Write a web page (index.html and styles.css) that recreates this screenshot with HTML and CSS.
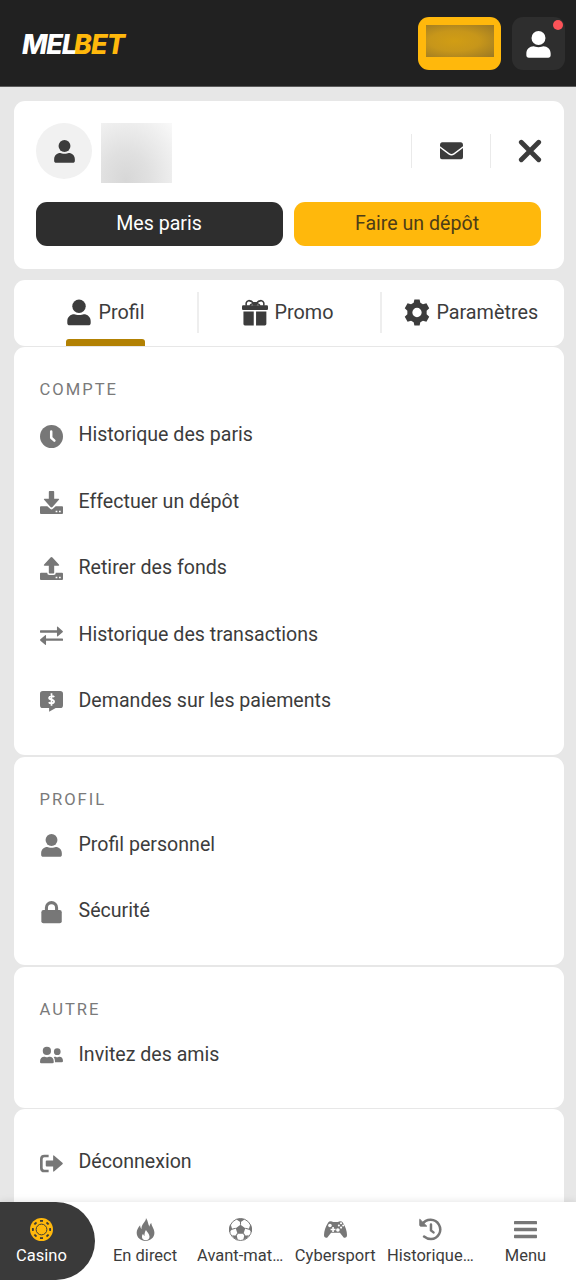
FILE: index.html
```html
<!DOCTYPE html>
<html lang="fr">
<head>
<meta charset="utf-8">
<meta name="viewport" content="width=device-width, initial-scale=1">
<title>Melbet – Profil</title>
<link rel="stylesheet" href="styles.css">
</head>
<body>
<svg class="sprite" aria-hidden="true">
  <symbol id="user" viewBox="0 0 24 24"><circle cx="12" cy="6.2" r="6.2"/><path d="M1.200 21.600V20c0-4 3-6.500 6.400-6.500 1 0 2.300.9 4.400.9s3.400-.9 4.400-.9c3.400 0 6.400 2.500 6.400 6.500v1.600c0 1.400-.8 2.200-2.200 2.200H3.400c-1.400 0-2.200-.8-2.200-2.200z"/></symbol>
  <symbol id="mail" viewBox="0 0 24 18"><path d="M0 3.200Q0 0 2.500 0h19Q24 0 24 3.200v1.200l-9.800 7.200q-2.200 1.700-4.400 0L0 4.400z"/><path d="M0 6.200l9 6.700q3 2 6 0l9-6.700v9Q24 18 21.500 18h-19Q0 18 0 15.200z"/></symbol>
  <symbol id="close" viewBox="0 0 24 24"><path d="M3.300 3.300l17.400 17.400M20.700 3.300L3.300 20.700" fill="none" stroke="currentColor" stroke-width="4.800" stroke-linecap="round"/></symbol>
  <symbol id="gift" viewBox="0 0 27 27"><rect x="0" y="6" width="27" height="5" rx="1.200"/><path d="M1.500 12.500h10.700V27H3q-1.500 0-1.500-1.500zM14.600 12.500h10.700v13q0 1.500-1.500 1.500h-9.200z"/><path d="M12.500 4.500C10.500 2 8.500 1 6.800 1.200 4.500 1.500 3.800 4 4.600 6.500M14.500 4.500C16.500 2 18.500 1 20.200 1.200c2.300.3 3 2.800 2.200 5.300M8.500 6.500c.5-2 2-2.200 4-2M18.500 6.500c-.5-2-2-2.200-4-2" fill="none" stroke="currentColor" stroke-width="1.600"/><rect x="11" y="2.600" width="5" height="4" rx="1.500"/></symbol>
  <symbol id="gear" viewBox="0 0 24 24"><path fill-rule="evenodd" d="M9.600 0h4.800l.7 3 2.400 1.400 3.200-1 2.600 4.600-2.400 2.400v3.200l2.400 2.400-2.600 4.600-3.200-1-2.400 1.400-.7 3H9.600l-.7-3-2.400-1.400-3.200 1L.7 16l2.400-2.400v-3.200L.7 8l2.600-4.600 3.200 1L8.900 3zM12 7.700a4.300 4.300 0 100 8.600 4.300 4.300 0 000-8.600z"/></symbol>
  <symbol id="clock" viewBox="0 0 24 24"><circle cx="12" cy="12" r="12"/><path d="M11.700 6.800v6.500l3.300 3" fill="none" stroke="#fff" stroke-width="2.600" stroke-linecap="round" stroke-linejoin="round"/></symbol>
  <symbol id="deposit" viewBox="0 0 24 24"><path d="M1 15.800h6.600l3.300 3q1.100.9 2.200 0l3.300-3H23q1 0 1 1V23q0 1-1 1H1q-1 0-1-1v-6.200q0-1 1-1z"/><path d="M16.300 20.500h1.800v1.600h-1.800zM19.800 20.500h1.800v1.600h-1.800z" fill="#fff"/><path d="M9.200.8Q9.200 0 10 0h4q.8 0 .8.800V8h4.400q1.400 0 .5 1.200l-6.700 7.600q-1 1-2 0L4.300 9.200Q3.400 8 4.800 8h4.400z" stroke="#fff" stroke-width="1.200" paint-order="stroke"/></symbol>
  <symbol id="withdraw" viewBox="0 0 24 24"><path d="M1 16.500h6.500q0 2.300 2.300 2.300h4.400q2.300 0 2.300-2.300H23q1 0 1 1V23q0 1-1 1H1q-1 0-1-1v-5.500q0-1 1-1z"/><path d="M16.300 20.500h1.800v1.600h-1.800zM19.800 20.500h1.800v1.600h-1.800z" fill="#fff"/><path d="M9.200 16.400q0 .8.800.8h4q.8 0 .8-.8V9h4.400q1.400 0 .5-1.200L13 .5q-1-.9-2 0L4.300 7.800Q3.400 9 4.800 9h4.400z"/></symbol>
  <symbol id="exchange" viewBox="0 0 24 24"><path d="M.5 6.600h17.200V3.200q0-1.100.9-.4l5 4.400q.7.700 0 1.400l-5 4.200q-.9.600-.9-.5V9H.5Q0 9 0 8.500V7.100q0-.5.500-.5z"/><path d="M23.500 15.200H6.300v-3q0-1.100-.9-.4l-5 4.200q-.7.700 0 1.400l5 4.200q.9.600.9-.5v-3.500h17.200q.5 0 .5-.5v-1.400q0-.5-.5-.5z"/></symbol>
  <symbol id="request" viewBox="0 0 24 24"><path d="M3 1h18q3 0 3 3v11.800q0 3-3 3h-4.600L9.500 22.700V18.800H3q-3 0-3-3V4q0-3 3-3z"/><path d="M14.800 7.400c-.7-1.200-4.900-1.500-5.300.7-.3 2.500 5.400 1.500 5.200 4.200-.2 2.300-4.600 2-5.500.5M12 3.500v13" fill="none" stroke="#fff" stroke-width="1.800"/></symbol>
  <symbol id="lock" viewBox="0 0 24 24"><rect x="1.400" y="9.500" width="21.300" height="13.800" rx="2.200"/><path d="M6.700 11V7a5.300 5.300 0 0110.600 0v4" fill="none" stroke="currentColor" stroke-width="3.200"/></symbol>
  <symbol id="friends" viewBox="0 0 24 24"><circle cx="7.200" cy="7.200" r="4.300"/><path d="M0 18.700c0-3.700 1.800-5.400 4.400-5.400 1 0 1.500.5 2.800.5s1.800-.5 2.800-.5c2.600 0 4.400 1.700 4.400 5.400q0 1.400-1.400 1.400H1.400Q0 20.100 0 18.700z"/><circle cx="18" cy="8" r="3.500"/><path d="M15.600 19h7q1.400 0 1.400-1.300c0-3-1.500-4.500-3.700-4.500-.8 0-1.300.5-2.300.5s-1.500-.5-2.400-.5l-1.400.3c1 1.400 1.500 3.300 1.400 5.500z"/></symbol>
  <symbol id="logout" viewBox="0 0 24 24"><path d="M9 4.200H4.600q-3.200 0-3.200 3.200v9.200q0 3.200 3.200 3.200H9" fill="none" stroke="currentColor" stroke-width="2.800"/><path d="M7 8.800h6.700V4.300q0-1.400 1.200-.5l8.500 7.500q.8.700 0 1.400l-8.500 7.500q-1.200.9-1.200-.5v-4.500H7q-1 0-1-1V9.800q0-1 1-1z"/></symbol>
  <symbol id="chip" viewBox="0 0 24 24"><circle cx="12" cy="12" r="12"/><circle cx="12" cy="12" r="5.600" fill="none" stroke="#3a3a3a"/><circle cx="12" cy="12" r="9" pathLength="80" fill="none" stroke="#3a3a3a" stroke-width="2" stroke-dasharray="4.400 5.600" stroke-dashoffset="2.200"/></symbol>
  <symbol id="flame" viewBox="0 0 24 24"><path d="M12.500 0c.4 3.500-5.200 6.300-4.600 11.500C6.800 10.500 6.400 8.900 6.400 7.600 4.200 10 2.800 12.800 2.800 15.500 2.800 20.500 6.800 24 12 24s9.300-3.600 9.300-8.500c0-4.400-2.600-6-3.300-10.300-1.200 1-1.800 2.300-1.800 4C14.500 6.500 14.800 2.800 12.500 0z"/><path d="M12.500 12.500c1 2 3.700 4.200 3.700 7 0 2.200-1.700 3.700-3.900 3.700-2.400 0-4-1.500-4-3.700 0-1.200.4-2.100 1.200-3 .2 1.200.7 1.800 1.500 2.200-.2-2.400.4-4.400 1.500-6.200z" fill="#fff"/></symbol>
  <symbol id="ball" viewBox="0 0 24 24"><circle cx="12" cy="12" r="11.500" fill="#fff" stroke="currentColor"/><path d="M12 7l5 3.700-1.900 5.800H8.900L7 10.700zM7.500 1.300L12 4.500l4.500-3.200Q12-.3 7.500 1.300zM22.300 6.500l-1.700 5.200 3.400 3.500q.8-4.700-1.700-8.700zM1.700 6.500l1.700 5.200L0 15.200Q-.8 10.500 1.700 6.500zM14.700 23.300l1.200-4.800 5-.4q-2.200 4-6.200 5.200zM9.300 23.300l-1.200-4.800-5-.4q2.200 4 6.200 5.200z"/><path d="M12 7V4M17 10.700l4 1M15 16l2 3M9 16l-2 3M7 10.700l-4 1" fill="none" stroke="currentColor" stroke-width="1.100"/></symbol>
  <symbol id="pad" viewBox="0 0 24 24"><path d="M4.400 4.600Q5.500 3 8.500 3.600l.8.700h5.400l.8-.7q3-.6 4.100 1 4.400 7 4.400 13.200 0 2.800-2.400 2.800-.9 0-1.500-.9l-3.500-4.300H7.400l-3.500 4.300q-.6.900-1.500.9-2.400 0-2.400-2.800Q0 11.600 4.400 4.600z"/><g fill="#fff"><circle cx="6.200" cy="7.800" r="1.900"/><path d="M8.600 9.500h1.700v1.700H12v1.700h-1.700v1.700H8.600v-1.700H6.900v-1.700h1.700z"/><circle cx="17.800" cy="5.500" r="1.100"/><circle cx="15.500" cy="7.800" r="1.100"/><circle cx="20" cy="7.800" r="1.100"/><circle cx="17.800" cy="10" r="1.100"/><circle cx="14.500" cy="12.500" r="1.900"/></g></symbol>
  <symbol id="history" viewBox="0 0 24 24"><path d="M3.500 6.500A10.100 10.100 0 1112.500 22q-4 0-7.200-2.600M12.500 6.800v6.200l2.600 2" fill="none" stroke="currentColor" stroke-width="2.600" stroke-linecap="round"/><path d="M.8 1.300v6.200q0 1 1 1h6.300z" stroke="currentColor" stroke-linejoin="round"/></symbol>
  <symbol id="bars" viewBox="0 0 24 24"><rect y="3" width="24" height="3.600" rx=".7"/><rect y="10.200" width="24" height="3.600" rx=".7"/><rect y="17.400" width="24" height="3.600" rx=".7"/></symbol>
</svg>

<div class="app">
  <header class="topbar">
    <div class="logo"><span class="logo-mel">MEL</span><span class="logo-bet">BET</span></div>
    <div class="topbar-actions">
      <div class="balance"><div class="balance-mask"></div></div>
      <div class="account"><svg class="account-icon"><use href="#user"/></svg><span class="badge"></span></div>
    </div>
  </header>

  <main class="content">
    <section class="card summary">
      <div class="identity">
        <div class="avatar"><svg class="avatar-icon"><use href="#user"/></svg></div>
        <div class="name-mask"></div>
        <div class="summary-tools">
          <div class="mail"><svg class="mail-icon"><use href="#mail"/></svg></div>
          <svg class="close-icon"><use href="#close"/></svg>
        </div>
      </div>
      <div class="buttons">
        <div class="button button-dark">Mes paris</div>
        <div class="button button-gold">Faire un dépôt</div>
      </div>
    </section>

    <nav class="card tabs">
      <div class="tab"><div class="tab-label tab-active"><svg class="tab-icon"><use href="#user"/></svg><span class="label">Profil</span></div></div>
      <div class="tab"><div class="tab-label"><svg class="tab-icon"><use href="#gift"/></svg><span class="label">Promo</span></div></div>
      <div class="tab"><div class="tab-label"><svg class="tab-icon"><use href="#gear"/></svg><span class="label">Paramètres</span></div></div>
    </nav>

    <section class="card group group-account">
      <h2 class="group-title">COMPTE</h2>
      <div class="row"><svg class="row-icon"><use href="#clock"/></svg><span class="label">Historique des paris</span></div>
      <div class="row"><svg class="row-icon"><use href="#deposit"/></svg><span class="label">Effectuer un dépôt</span></div>
      <div class="row"><svg class="row-icon"><use href="#withdraw"/></svg><span class="label">Retirer des fonds</span></div>
      <div class="row"><svg class="row-icon"><use href="#exchange"/></svg><span class="label">Historique des transactions</span></div>
      <div class="row"><svg class="row-icon"><use href="#request"/></svg><span class="label">Demandes sur les paiements</span></div>
    </section>

    <section class="card group group-profile">
      <h2 class="group-title">PROFIL</h2>
      <div class="row"><svg class="row-icon"><use href="#user"/></svg><span class="label">Profil personnel</span></div>
      <div class="row"><svg class="row-icon"><use href="#lock"/></svg><span class="label">Sécurité</span></div>
    </section>

    <section class="card group group-other">
      <h2 class="group-title">AUTRE</h2>
      <div class="row"><svg class="row-icon"><use href="#friends"/></svg><span class="label">Invitez des amis</span></div>
    </section>

    <section class="card group group-plain">
      <div class="row"><svg class="row-icon"><use href="#logout"/></svg><span class="label">Déconnexion</span></div>
    </section>
  </main>

  <nav class="bottom-nav">
    <div class="nav-item nav-casino"><svg class="nav-icon"><use href="#chip"/></svg><span class="nav-label">Casino</span></div>
    <div class="nav-item"><svg class="nav-icon"><use href="#flame"/></svg><span class="nav-label">En direct</span></div>
    <div class="nav-item"><svg class="nav-icon"><use href="#ball"/></svg><span class="nav-label">Avant-mat…</span></div>
    <div class="nav-item"><svg class="nav-icon"><use href="#pad"/></svg><span class="nav-label">Cybersport</span></div>
    <div class="nav-item"><svg class="nav-icon"><use href="#history"/></svg><span class="nav-label">Historique…</span></div>
    <div class="nav-item"><svg class="nav-icon"><use href="#bars"/></svg><span class="nav-label">Menu</span></div>
  </nav>
</div>
</body>
</html>
```
FILE: styles.css
```css
* { box-sizing: border-box; }

body {
  margin: 0;
  background: #e7e7e7;
  color: #3c3c3c;
  font-family: Roboto, "Liberation Sans", sans-serif;
  font-size: 19.6px;
}

svg { display: block; flex: none; fill: currentColor; }
.sprite { display: none; }

.app {
  display: flex;
  flex-direction: column;
  height: 1280px;
  overflow: hidden;
}

.topbar {
  display: flex;
  flex: none;
  align-items: center;
  justify-content: space-between;
  height: 87px;
  padding: 0 11px 0 22px;
  background: #212121;
  border-bottom: 1px solid #5c5c5c;
}

.logo {
  display: flex;
  padding-top: 3px;
  font-family: Inter, sans-serif;
  font-size: 27px;
  font-style: italic;
  font-weight: 800;
  line-height: 32px;
  letter-spacing: -1.2px;
}
.logo-mel { color: #fff; z-index: 1; }
.logo-bet { color: #ffb80c; margin-left: -2px; letter-spacing: -.8px; }

.topbar-actions { display: flex; gap: 11px; }

.balance {
  width: 83px;
  height: 53px;
  padding: 8px 7px 13px 8px;
  border-radius: 11px;
  background: #ffb80c;
}
.balance-mask {
  height: 100%;
  background: radial-gradient(ellipse at 42% 50%, #d19d14 0%, #c7961a 45%, #9b7824 100%);
}

.account {
  position: relative;
  display: flex;
  align-items: center;
  justify-content: center;
  width: 53px;
  height: 53px;
  border-radius: 11px;
  background: #2e2e2e;
  color: #fff;
}
.account-icon { width: 27px; height: 27px; margin-top: 2px; }
.badge {
  position: absolute;
  top: 3px;
  right: 2px;
  width: 10px;
  height: 10px;
  border-radius: 50%;
  background: #fc5358;
}

.content {
  display: flex;
  flex: 1;
  flex-direction: column;
  gap: 1.5px;
  min-height: 0;
  padding: 13.6px 12.5px 0 13.5px;
  overflow: hidden;
}

.card { flex: none; border-radius: 11px; background: #fff; }

.summary {
  height: 168px;
  margin-bottom: 10px;
  padding: 22.5px 22.5px 0;
}
.identity { display: flex; height: 78.5px; }
.avatar {
  display: flex;
  align-items: center;
  justify-content: center;
  width: 56px;
  height: 56px;
  border-radius: 50%;
  background: #f1f1f1;
}
.avatar-icon { width: 23px; height: 23px; }
.name-mask {
  width: 71px;
  height: 60px;
  margin-left: 8.5px;
  background: radial-gradient(ellipse at 35% 95%, #d7d7d7 0%, #e0e0e0 35%, #eeeeee 72%, #f9f9f9 100%);
}
.summary-tools {
  display: flex;
  align-items: center;
  gap: 27px;
  height: 56px;
  margin-right: -1px;
  margin-left: auto;
}
.mail {
  display: flex;
  align-items: center;
  justify-content: center;
  width: 80px;
  height: 34px;
  border: solid #eaeaea;
  border-width: 0 1.5px;
}
.mail-icon { width: 23px; height: 17.5px; }
.close-icon { width: 24px; height: 24px; }

.buttons { display: grid; grid-template-columns: 1fr 1fr; gap: 11px; }
.button {
  height: 44.5px;
  padding-right: 1px;
  border-radius: 11px;
  line-height: 43px;
  text-align: center;
}
.button-dark { background: #2e2e2e; color: #fff; }
.button-gold { background: #ffb80c; color: #4d3d17; }

.tabs {
  display: grid;
  grid-template-columns: 183.5px 183px 1fr;
  height: 65.6px;
  font-size: 19.8px;
}
.tab { display: flex; justify-content: center; }
.tab + .tab {
  padding-right: 1.5px;
  background: linear-gradient(#eee, #eee) 0 12px / 2px 41px no-repeat;
}
.tab-label {
  position: relative;
  display: flex;
  align-items: center;
  gap: 6.5px;
  height: 65.6px;
}
.tab-active::after {
  content: "";
  position: absolute;
  right: 0;
  bottom: 0;
  left: 0;
  height: 7px;
  border-radius: 3px 3px 0 0;
  background: #b28103;
}
.tab-icon { width: 26px; height: 27px; }
.label { line-height: 22px; }

.group-title {
  height: 55px;
  margin: 0;
  padding: 33.3px 0 0 26px;
  color: #7a7a7a;
  font-size: 16.6px;
  font-weight: 400;
  line-height: 20px;
  letter-spacing: 2px;
}
.group-account { padding-bottom: 21.2px; }
.group-profile { padding-bottom: 20.6px; }
.group-other { padding-bottom: 19.6px; }
.group-plain { padding: 20px 0; }
.row {
  display: flex;
  align-items: center;
  gap: 16px;
  height: 66.4px;
  padding-left: 26px;
}
.row-icon { width: 23px; height: 23px; margin-top: 1.5px; color: #777; }

.bottom-nav {
  display: flex;
  flex: none;
  z-index: 1;
  height: 78px;
  padding-right: 3px;
  background: #fff;
  box-shadow: 0 0 8px rgba(0, 0, 0, .12);
  font-size: 16.5px;
}
.nav-item {
  display: flex;
  flex: 1;
  flex-direction: column;
  align-items: center;
  gap: 5px;
  min-width: 0;
  padding-top: 16px;
  white-space: nowrap;
}
.nav-icon { width: 23px; height: 23px; color: #777; }
.nav-label { line-height: 19px; }
.nav-casino {
  flex: 0 0 95px;
  margin-right: 2.5px;
  padding-right: 12px;
  border-radius: 0 39px 39px 0;
  background: #3a3a3a;
  color: #fff;
}
.nav-casino .nav-icon { color: #ffb80c; }
```
